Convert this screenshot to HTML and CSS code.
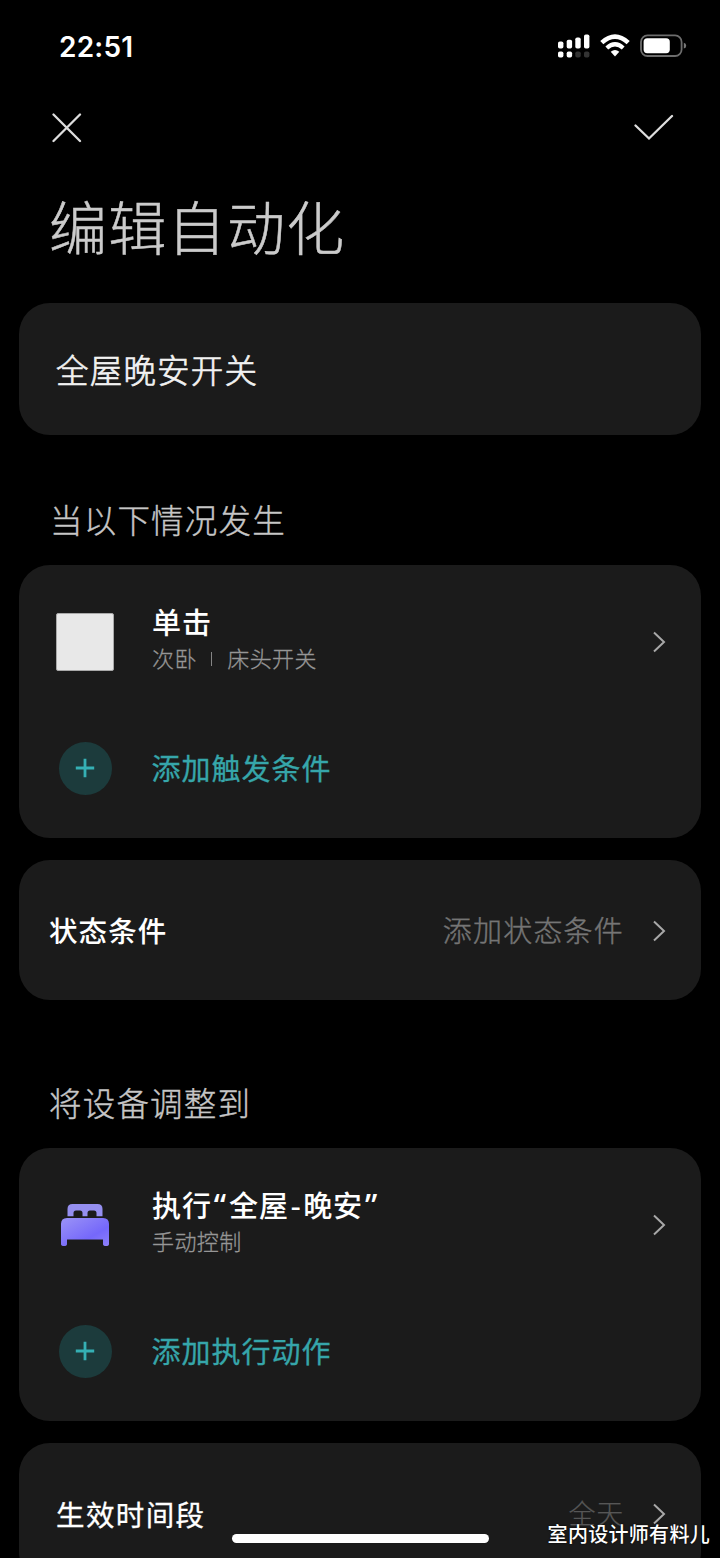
FILE: index.html
```html
<!DOCTYPE html>
<html lang="zh-CN">
<head>
    <meta charset="UTF-8">
    <meta name="viewport" content="width=device-width, initial-scale=1.0">
    <title>编辑自动化</title>
    <link rel="stylesheet" href="styles.css">
</head>
<body>

    <!-- Status Bar -->
    <div class="status-bar">
        <span class="clock">22:51</span>
        <div class="status-icons">
            <svg width="34" height="26" viewBox="0 0 34 26" fill="#fff">
                <rect x="1" y="8.5" width="5.4" height="7" rx="1.8"/>
                <rect x="9.7" y="6.8" width="5.4" height="8.7" rx="1.8"/>
                <rect x="18.3" y="4.5" width="5.4" height="11" rx="1.8"/>
                <rect x="27" y="1.5" width="5.4" height="14" rx="1.8"/>
                <rect x="1" y="18.5" width="5.4" height="6" rx="1.8"/>
                <rect x="9.7" y="18.5" width="5.4" height="6" rx="1.8"/>
                <rect x="18.3" y="18.5" width="5.4" height="6" rx="1.8" fill="#333"/>
                <rect x="27" y="18.5" width="5.4" height="6" rx="1.8" fill="#333"/>
            </svg>
            <svg class="wifi" width="30" height="24" viewBox="0 0 30 24" fill="none" stroke="#fff">
                <path d="M1.800 8.600Q15-3.400 28.200 8.600" stroke-width="4.600"/>
                <path d="M6.800 14Q15 6.600 23.200 14" stroke-width="4.200"/>
                <path d="M10.700 17.800Q15 14.300 19.300 17.800L15 22.500Z" fill="#fff" stroke="none"/>
            </svg>
            <svg class="battery" width="47" height="24" viewBox="0 0 47 24">
                <rect x="1" y="1.4" width="40.6" height="20.6" rx="6.5" fill="none" stroke="#6d6d6d" stroke-width="1.8"/>
                <rect x="3.6" y="4.2" width="26.2" height="15" rx="3.6" fill="#fff"/>
                <path d="M43.8 8.8Q46.2 9.4 46.2 11.7T43.8 14.6Z" fill="#777"/>
            </svg>
        </div>
    </div>

    <!-- Close / Confirm -->
    <div class="toolbar">
        <svg width="30" height="30" viewBox="0 0 30 30" class="tool-icon"><path d="M1.500 1.500L28 28M28 1.500L1.500 28"/></svg>
        <svg width="40" height="30" viewBox="0 0 40 30" class="tool-icon"><path d="M1.5 12.5L15 25.5L38 3"/></svg>
    </div>

    <h1 class="page-title">编辑自动化</h1>

    <div class="card name-card">全屋晚安开关</div>

    <h2 class="section-title">当以下情况发生</h2>
    <div class="card">
        <div class="row">
            <div class="row-icon"><span class="switch-icon"></span></div>
            <div class="row-text">
                <div class="row-title">单击</div>
                <div class="row-sub">次卧<span class="divider"></span>床头开关</div>
            </div>
            <svg class="chevron" width="14" height="24" viewBox="0 0 14 24"><path d="M2 2.5L12 12L2 21.5"/></svg>
        </div>
        <div class="row add-row">
            <div class="row-icon"><span class="plus"><svg width="20" height="20" viewBox="0 0 20 20"><path d="M10 .8V19.2M.8 10H19.2"/></svg></span></div>
            <div class="add-label">添加触发条件</div>
        </div>
    </div>

    <div class="card setting-card">
        <span class="setting-name">状态条件</span>
        <span class="setting-value">添加状态条件</span>
        <svg class="chevron" width="14" height="24" viewBox="0 0 14 24"><path d="M2 2.5L12 12L2 21.5"/></svg>
    </div>

    <h2 class="section-title device-title">将设备调整到</h2>
    <div class="card">
        <div class="row">
            <div class="row-icon">
                <svg width="50" height="44" viewBox="0 0 50 44">
                    <defs>
                        <linearGradient id="bed" x1="0" y1="0" x2="1" y2="1">
                            <stop offset="0" stop-color="#9b93f6"/>
                            <stop offset="0.65" stop-color="#7568fa"/>
                            <stop offset="1" stop-color="#8d80fa"/>
                        </linearGradient>
                    </defs>
                    <path d="M7.5 13.3V6Q7.5 1 12.5 1H37.500Q42.500 1 42.500 6V13.300H36.500V10Q36.500 7.500 34 7.500H30Q27.500 7.500 27.500 10V13.300H22.500V10Q22.500 7.500 20 7.500H16Q13.500 7.500 13.500 10V13.300Z" fill="#958ff0"/>
                    <path d="M1 21Q1 15 7 15H43Q49 15 49 21V41Q49 43 46 43T43 41V36.500H7V41Q7 43 4 43T1 41Z" fill="url(#bed)"/>
                </svg>
            </div>
            <div class="row-text">
                <div class="row-title">执行<span class="quote">“</span>全屋<span class="dash">-</span>晚安<span class="quote">”</span></div>
                <div class="row-sub">手动控制</div>
            </div>
            <svg class="chevron" width="14" height="24" viewBox="0 0 14 24"><path d="M2 2.5L12 12L2 21.5"/></svg>
        </div>
        <div class="row add-row">
            <div class="row-icon"><span class="plus"><svg width="20" height="20" viewBox="0 0 20 20"><path d="M10 .8V19.2M.8 10H19.2"/></svg></span></div>
            <div class="add-label">添加执行动作</div>
        </div>
    </div>

    <div class="card setting-card time-card">
        <span class="setting-name">生效时间段</span>
        <span class="setting-value">全天</span>
        <svg class="chevron" width="14" height="24" viewBox="0 0 14 24"><path d="M2 2.5L12 12L2 21.5"/></svg>
    </div>

    <!-- Overlays -->
    <div class="home-indicator"></div>
    <div class="watermark">室内设计师有料儿</div>

</body>
</html>
```
FILE: styles.css
```css
* { box-sizing: border-box; }
body {
    margin: 0;
    position: relative;
    height: 1558px;
    overflow: hidden;
    background: #000;
    color: #f2f2f2;
    font-family: "Noto Sans CJK SC", sans-serif;
}
svg { display: block; flex: none; }

/* Status Bar */
.status-bar {
    height: 92px;
    padding: 0 33px 0 59px;
    display: flex;
    justify-content: space-between;
    align-items: center;
}
.clock { padding-top: 1px; font-family: Inter, sans-serif; font-size: 28px; font-weight: 600; letter-spacing: 0.2px; color: #fff; }
.status-icons { display: flex; align-items: center; }
.wifi { margin-left: 9px; }
.battery { margin-left: 10px; }

/* Toolbar */
.toolbar {
    height: 71px;
    padding: 0 46px 0 52px;
    display: flex;
    justify-content: space-between;
    align-items: center;
}
.tool-icon { fill: none; stroke: #dedede; stroke-width: 2.3; stroke-linecap: round; }

.page-title {
    height: 140px;
    margin: 0;
    padding: 19px 0 0 49px;
    font-size: 58px;
    font-weight: 300;
    line-height: 86px;
    letter-spacing: 1.3px;
    color: #cbcbcb;
    -webkit-text-stroke: 0.5px #cbcbcb;
}

/* Cards */
.card { margin: 0 19px 22px; border-radius: 31px; background: #1b1b1b; }
.name-card {
    height: 132px;
    margin-bottom: 0;
    padding-left: 37px;
    font-size: 32.5px;
    font-weight: 300;
    line-height: 131px;
    letter-spacing: 1.2px;
    -webkit-text-stroke: 0.7px #f2f2f2;
}
.section-title {
    margin: 60px 0 22px 50px;
    font-size: 32.5px;
    font-weight: 300;
    line-height: 48px;
    letter-spacing: 1.2px;
    color: #c6c6c6;
    -webkit-text-stroke: 0.4px #c6c6c6;
}
.device-title { margin-top: 78px; margin-left: 49px; }

/* Rows */
.row { height: 154px; padding: 0 35px 0 37px; display: flex; align-items: center; }
.add-row { height: 97px; }
.card .add-row:last-child { height: 119px; padding-top: 1px; padding-bottom: 22px; }
.row-icon { width: 58px; display: flex; justify-content: center; }
.row-text { flex: 1; margin-left: 38px; padding-bottom: 7px; }
.row-title { height: 38px; font-size: 29px; font-weight: 500; line-height: 38px; letter-spacing: 0.9px; color: #fff; }
.quote { margin-left: 2px; font-family: "Noto Sans", sans-serif; font-size: 32px; line-height: 1; letter-spacing: 3px; }
.dash { margin: 0 1.5px; }
.row-sub {
    display: flex;
    align-items: center;
    font-size: 22px;
    font-weight: 300;
    line-height: 35px;
    letter-spacing: 0.4px;
    color: #969696;
    -webkit-text-stroke: 0.3px #969696;
}
.divider { width: 1.5px; height: 14px; margin: 2px 15px 0 14px; background: #858585; }
.switch-icon { width: 58px; height: 58px; border: 1px solid #a9a9a9; border-radius: 2px; background: #e8e8e8; }
.plus {
    width: 53px;
    height: 53px;
    border-radius: 50%;
    background: #1c3b3c;
    display: flex;
    justify-content: center;
    align-items: center;
}
.plus path { stroke: #35b0b4; stroke-width: 2.8; }
.add-label {
    margin-left: 37.5px;
    padding-bottom: 2px;
    font-size: 29px;
    font-weight: 400;
    letter-spacing: 1px;
    color: #36a6aa;
    -webkit-text-stroke: 0.3px #36a6aa;
}
.chevron path { fill: none; stroke: #a8a8a8; stroke-width: 2; }

/* Setting Cards */
.setting-card {
    height: 140px;
    margin-bottom: 0;
    padding: 1px 35px 0 30px;
    display: flex;
    align-items: center;
}
.setting-name { flex: 1; padding-bottom: 3px; font-size: 28.5px; font-weight: 500; letter-spacing: 1.1px; color: #fff; }
.setting-value {
    margin-right: 28px;
    padding-bottom: 3px;
    font-size: 29px;
    font-weight: 300;
    letter-spacing: 1.2px;
    color: #757575;
    -webkit-text-stroke: 0.4px #757575;
}
.time-card { padding-left: 37px; }
.time-card .setting-name { padding-bottom: 1px; letter-spacing: 1.4px; font-weight: 400; -webkit-text-stroke: 0.3px #fff; }
.time-card .setting-value { font-size: 27px; letter-spacing: 0.8px; color: #565656; -webkit-text-stroke: 0.2px #565656; }

.home-indicator {
    position: absolute;
    left: 232px;
    bottom: 15px;
    width: 257px;
    height: 9px;
    border-radius: 5px;
    background: #fff;
}
.watermark {
    position: absolute;
    right: 10px;
    bottom: 9px;
    font-size: 20px;
    font-weight: 500;
    line-height: 30px;
    letter-spacing: 0.3px;
    color: #fff;
    text-shadow: 0 0 2px #000;
}
```
